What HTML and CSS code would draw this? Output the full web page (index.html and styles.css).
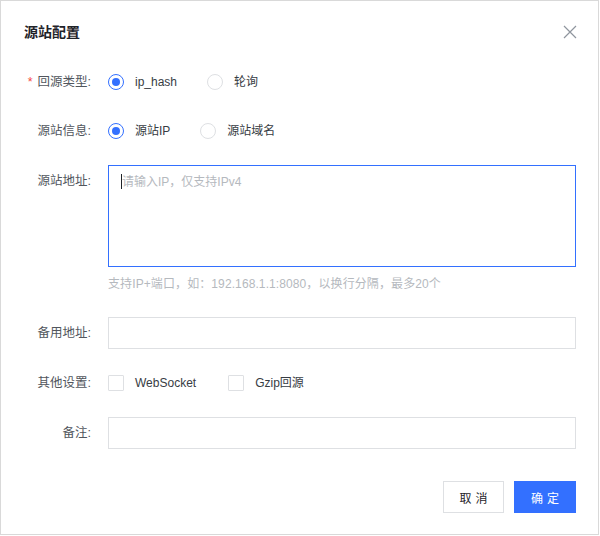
FILE: index.html
```html
<!DOCTYPE html>
<html lang="zh-CN">
<head>
<meta charset="utf-8">
<title>源站配置</title>
<link rel="stylesheet" href="styles.css">
</head>
<body>
<div class="dialog">
  <div class="header">
    <div class="title">源站配置</div>
    <button class="close" aria-label="关闭">
      <svg width="14" height="14" viewBox="0 0 14 14"><path d="M1 1 L13 13 M13 1 L1 13" stroke="#8f959e" stroke-width="1.2" fill="none"/></svg>
    </button>
  </div>
  <div class="form">
    <div class="item item-first">
      <div class="label"><span class="req">*</span>回源类型:</div>
      <div class="control options">
        <label class="opt"><span class="radio checked"></span><span class="opt-text">ip_hash</span></label>
        <label class="opt"><span class="radio"></span><span class="opt-text">轮询</span></label>
      </div>
    </div>
    <div class="item">
      <div class="label">源站信息:</div>
      <div class="control options">
        <label class="opt"><span class="radio checked"></span><span class="opt-text">源站IP</span></label>
        <label class="opt"><span class="radio"></span><span class="opt-text">源站域名</span></label>
      </div>
    </div>
    <div class="item item-top item-hint">
      <div class="label label-top">源站地址:</div>
      <div class="control">
        <div class="ta-wrap">
          <textarea class="textarea" placeholder="请输入IP，仅支持IPv4"></textarea>
          <span class="caret"></span>
        </div>
        <div class="hint">支持IP+端口，如：192.168.1.1:8080，以换行分隔，最多20个</div>
      </div>
    </div>
    <div class="item">
      <div class="label">备用地址:</div>
      <div class="control"><input class="input" type="text"></div>
    </div>
    <div class="item">
      <div class="label">其他设置:</div>
      <div class="control options">
        <label class="opt opt-cb"><span class="checkbox"></span><span class="opt-text">WebSocket</span></label>
        <label class="opt"><span class="checkbox"></span><span class="opt-text">Gzip回源</span></label>
      </div>
    </div>
    <div class="item">
      <div class="label">备注:</div>
      <div class="control"><input class="input" type="text"></div>
    </div>
  </div>
  <div class="footer">
    <button class="btn btn-default">取消</button>
    <button class="btn btn-primary">确定</button>
  </div>
</div>
</body>
</html>
```
FILE: styles.css
```css
* { box-sizing: border-box; }
html, body { margin: 0; padding: 0; background: #fff; }
body {
  font-family: "Liberation Sans", "Noto Sans CJK SC", sans-serif;
  font-size: 12px;
  color: #1f2329;
}
.dialog {
  width: 599px;
  height: 535px;
  border: 1px solid #d9d9d9;
  padding: 20px 22px 0 23px;
  display: flex;
  flex-direction: column;
}
.header {
  display: flex;
  align-items: center;
  justify-content: space-between;
  height: 22px;
}
.title {
  font-size: 14px;
  font-weight: bold;
  line-height: 22px;
  color: #1f2329;
}
.close {
  border: 0;
  background: none;
  padding: 0;
  width: 14px;
  height: 14px;
  display: flex;
  margin-right: -1px;
}
.form {
  margin-top: 23px;
  display: flex;
  flex-direction: column;
  gap: 18px;
}
.item {
  display: flex;
  align-items: center;
  min-height: 32px;
}
.item-first { margin-bottom: -1px; }
.item-top { align-items: flex-start; }
.item-hint { padding-bottom: 7px; }
.label {
  width: 67px;
  margin-right: 17px;
  text-align: right;
  color: #51565d;
  font-size: 12.5px;
  line-height: 16px;
  flex-shrink: 0;
  white-space: nowrap;
}
.label-top { padding-top: 8px; }
.req { color: #f54a45; margin-right: 5px; }
.control { flex: 1; }
.options { display: flex; align-items: center; }
.opt {
  display: flex;
  align-items: center;
  margin-right: 30px;
  color: #373c43;
  line-height: 16px;
}
.opt-cb { margin-right: 32px; }
.opt-text { margin-left: 11px; }
.radio {
  width: 16px;
  height: 16px;
  border-radius: 50%;
  border: 1px solid #dee0e3;
  display: flex;
  align-items: center;
  justify-content: center;
}
.radio.checked { border-color: #3370ff; }
.radio.checked::after {
  content: "";
  width: 8px;
  height: 8px;
  border-radius: 50%;
  background: #3370ff;
}
.checkbox {
  width: 16px;
  height: 16px;
  border: 1px solid #dee0e3;
  border-radius: 1px;
}
.ta-wrap { position: relative; }
.textarea {
  display: block;
  width: 100%;
  height: 102px;
  border: 1px solid #3370ff;
  border-radius: 0;
  padding: 8px 13px;
  font: inherit;
  font-size: 12px;
  line-height: 16px;
  resize: none;
  outline: none;
  color: #1f2329;
}
.textarea::placeholder { color: #b5b9be; }
.caret {
  position: absolute;
  left: 13px;
  top: 9px;
  width: 1px;
  height: 15px;
  background: #1f2329;
}
.hint {
  margin-top: 9px;
  line-height: 16px;
  color: #b5b9be;
  letter-spacing: 0.1px;
}
.input {
  display: block;
  width: 100%;
  height: 32px;
  border: 1px solid #dee0e3;
  border-radius: 0;
  padding: 0 12px;
  font: inherit;
  outline: none;
}
.footer {
  margin-top: 32px;
  display: flex;
  justify-content: flex-end;
  gap: 10px;
}
.btn {
  height: 32px;
  font: inherit;
  font-size: 12px;
  letter-spacing: 4px;
  padding: 0 0 0 4px;
  border-radius: 0;
  cursor: pointer;
}
.btn-default {
  width: 61px;
  background: #fff;
  border: 1px solid #dee0e3;
  color: #1f2329;
}
.btn-primary {
  width: 62px;
  background: #3370ff;
  border: 1px solid #3370ff;
  color: #fff;
}
```
